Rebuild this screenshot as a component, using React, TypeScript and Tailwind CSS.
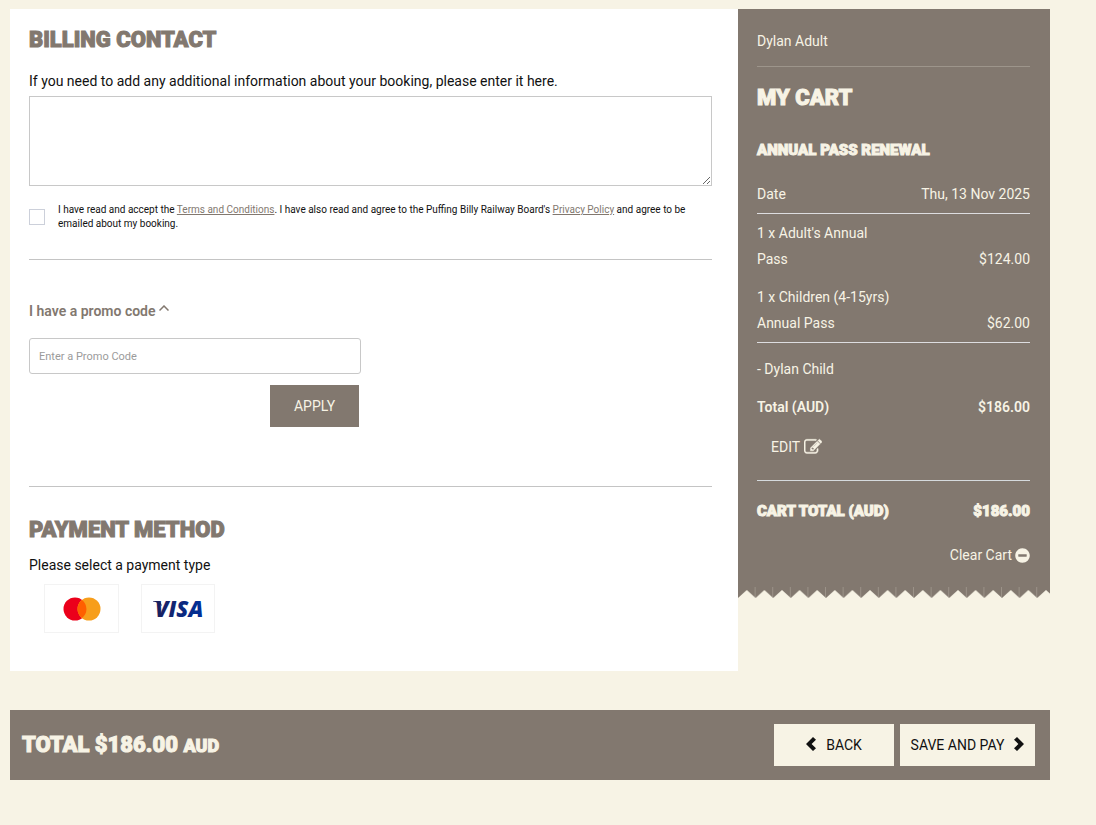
import { useState } from "react";
import { FaMinusCircle } from "react-icons/fa";

const heavy = "font-['Roboto'] font-black uppercase [-webkit-text-stroke:1px_currentColor]";
const heading = heavy + " text-[22px] leading-[26px]";
const smallHeading = heavy + " text-[15px] leading-[26px]";

const EditIcon = () => (
  <svg viewBox="0 0 1792 1792" className="w-[18px] h-[18px]" fill="currentColor" stroke="currentColor" strokeWidth="40" aria-hidden="true">
    <path d="M888 1184l116-116-152-152-116 116v56h96v96h56zm440-720q-16-16-33 1l-350 350q-17 17-1 33t33-1l350-350q17-17 1-33zm80 594v190q0 119-84.5 203.5t-203.5 84.5h-832q-119 0-203.5-84.5t-84.5-203.5v-832q0-119 84.5-203.5t203.5-84.5h832q63 0 117 25 15 7 18 23 3 17-9 29l-49 49q-14 14-32 8-23-6-45-6h-832q-66 0-113 47t-47 113v832q0 66 47 113t113 47h832q66 0 113-47t47-113v-126q0-13 9-22l64-64q15-15 35-7t20 29zm-96-738l288 288-672 672h-288v-288zm444 132l-92 92-288-288 92-92q28-28 68-28t68 28l152 152q28 28 28 68t-28 68z" />
  </svg>
);

const Chevron = ({ className = "" }: { className?: string }) => (
  <svg viewBox="0 0 10 14" className={"w-[10px] h-[14px] mb-[2px] " + className} fill="currentColor" aria-hidden="true">
    <path d="M7 0L10 2.700 5.600 7l4.400 4.300L7 14 0 7z" />
  </svg>
);

const Mastercard = () => (
  <svg viewBox="0 0 38 24" className="w-[38px] h-[24px]" aria-hidden="true">
    <circle cx="12" cy="12" r="11.5" fill="#eb001b" />
    <circle cx="26" cy="12" r="11.5" fill="#f79e1b" />
    <path d="M19 2.9a11.5 11.5 0 0 1 0 18.2a11.5 11.5 0 0 1 0-18.2z" fill="#ff5f00" />
  </svg>
);

const Visa = () => (
  <svg viewBox="0 0 60 36" className="w-[60px] h-[36px]" aria-hidden="true">
    <defs>
      <linearGradient id="visa" x1="0" x2="1">
        <stop offset="0" stopColor="#1a1f5b" />
        <stop offset="1" stopColor="#00309b" />
      </linearGradient>
    </defs>
    <path d="M5 10h7l2 5Q10 11 5 10.500z" fill="#1a1f5b" />
    <text x="7" y="26" fontFamily="Open Sans, sans-serif" fontSize="22" fontWeight="800" fontStyle="italic" fill="url(#visa)">
      VISA
    </text>
  </svg>
);

const TornEdge = () => (
  <svg className="block w-full h-[11px]" aria-hidden="true">
    <defs>
      <pattern id="teeth" width="17.6" height="11" patternUnits="userSpaceOnUse">
        <path d="M0 0h17.600v11L8.800 3 0 11z" fill="#82786f" />
        <path d="M17.200 0v10" stroke="#a39b91" strokeWidth="0.8" />
      </pattern>
    </defs>
    <rect width="100%" height="11" fill="url(#teeth)" />
  </svg>
);

type RowProps = { label: string; value: string; className?: string };

const CartRow = ({ label, value, className = "" }: RowProps) => (
  <div className={"flex justify-between items-end leading-[26px] " + className}>
    <span className="w-1/2">{label}</span>
    <span>{value}</span>
  </div>
);

const Billing = () => {
  const [open, setOpen] = useState(true);

  return (
    <main className="w-[70%] bg-white pl-[19px] pr-[26px] pt-[18px] pb-[38px]">
      <h2 className={heading + " text-[#82786f]"}>Billing Contact</h2>
      <label htmlFor="info" className="block mt-[18px] leading-[20px]">
        If you need to add any additional information about your booking, please enter it here.
      </label>
      <textarea id="info" className="block w-full h-[90px] mt-[5px] border border-[#c8c8c8] outline-none resize" />
      <div className="flex items-center mt-[17px]">
        <input
          id="terms"
          type="checkbox"
          className="appearance-none shrink-0 w-[16px] h-[16px] border border-[#ccd0da] checked:bg-[#82786f]"
        />
        <label htmlFor="terms" className="ml-[13px] text-[10px] leading-[14px]">
          I have read and accept the{" "}
          <a href="#terms" className="underline text-[#82786f]">Terms and Conditions</a>. I have also read and agree to
          the Puffing Billy Railway Board's{" "}
          <a href="#privacy" className="underline text-[#82786f]">Privacy Policy</a> and agree to be emailed about my
          booking.
        </label>
      </div>
      <hr className="mt-[28px] border-[#c4c4c4]" />

      <button
        type="button"
        onClick={() => setOpen(!open)}
        className="flex items-start gap-[3px] mt-[41px] leading-[20px] font-semibold text-[#82786f]"
      >
        I have a promo code
        <svg viewBox="0 0 10 6" className="w-[10px] h-[6px] mt-[4px]" fill="none" stroke="currentColor" strokeWidth="1.500">
          <path d="M.5 5.500L5 1l4.500 4.500" />
        </svg>
      </button>
      {open && (
        <form className="w-[332px] mt-[17px]" onSubmit={(e) => e.preventDefault()}>
          <input
            type="text"
            aria-label="Promo code"
            placeholder="Enter a Promo Code"
            className="block w-full h-[36px] px-[9px] border border-[#c8c8c8] rounded-[3px] text-[11px] outline-none placeholder:text-[#9b9b9b]"
          />
          <div className="flex justify-end mt-[11px] pr-[2px]">
            <button type="submit" className="w-[89px] h-[42px] bg-[#82786f] text-[#f7f3e5]">APPLY</button>
          </div>
        </form>
      )}
      <hr className="mt-[59px] border-[#c4c4c4]" />

      <h2 className={heading + " mt-[30px] text-[#82786f]"}>Payment Method</h2>
      <p className="mt-[12px] leading-[20px]">Please select a payment type</p>
      <div className="flex gap-[22px] mt-[9px] ml-[15px]">
        <button type="button" aria-label="Mastercard" className="flex items-center justify-center w-[75px] h-[49px] border border-[#f3f3f3]">
          <Mastercard />
        </button>
        <button type="button" aria-label="Visa" className="flex items-center justify-center w-[74px] h-[49px] border border-[#f3f3f3]">
          <Visa />
        </button>
      </div>
    </main>
  );
};

const Cart = () => (
  <aside className="w-[30%] text-[#f7f3e5]">
    <div className="bg-[#82786f] pl-[19px] pr-[20px] pt-[19px] pb-[19px]">
      <p className="leading-[26px] pb-[12px] border-b border-[#9d958b]">Dylan Adult</p>
      <h2 className={heading + " mt-[18px]"}>My Cart</h2>
      <h3 className={smallHeading + " mt-[26px]"}>Annual Pass Renewal</h3>
      <CartRow label="Date" value="Thu, 13 Nov 2025" className="mt-[18px] pb-[6px] border-b border-[#dddde0]" />
      <CartRow label="1 x Adult's Annual Pass" value="$124.00" className="mt-[6px]" />
      <CartRow label="1 x Children (4-15yrs) Annual Pass" value="$62.00" className="mt-[12px] pb-[6px] border-b border-[#dddde0]" />
      <p className="mt-[13px] leading-[26px]">- Dylan Child</p>
      <CartRow label="Total (AUD)" value="$186.00" className="mt-[12px] font-semibold" />
      <div className="pt-[14px] pb-[20px] border-b border-[#d5dadd]">
        <button type="button" className="flex items-center gap-[4px] ml-[14px] leading-[26px]">
          EDIT <EditIcon />
        </button>
      </div>
      <div className={smallHeading + " flex justify-between mt-[17px]"}>
        <h3>Cart Total (AUD)</h3>
        <span>$186.00</span>
      </div>
      <div className="flex justify-end mt-[18px]">
        <button type="button" className="flex items-center gap-[3px] leading-[26px]">
          Clear Cart <FaMinusCircle className="w-[15px] h-[15px]" />
        </button>
      </div>
    </div>
    <TornEdge />
  </aside>
);

const App = () => (
  <div className="min-h-screen bg-[#f7f3e5] pt-[9px] pb-[45px] pl-[10px] pr-[46px] font-['Roboto',sans-serif] text-[14px] text-[#111]">
    <div className="flex items-start">
      <Billing />
      <Cart />
    </div>
    <footer className="flex items-center justify-between h-[70px] mt-[39px] pl-[12px] pr-[15px] bg-[#82786f]">
      <div className={heading + " text-[#f7f3e5]"}>
        Total $186.00 <span className="text-[18px]">AUD</span>
      </div>
      <div className="flex gap-[6px]">
        <button type="button" className="flex items-center justify-center gap-[10px] w-[120px] h-[42px] bg-[#f7f3e5]">
          <Chevron /> BACK
        </button>
        <button type="button" className="flex items-center justify-center gap-[10px] w-[135px] h-[42px] bg-[#f7f3e5]">
          SAVE AND PAY <Chevron className="rotate-180" />
        </button>
      </div>
    </footer>
  </div>
);

export default App;
